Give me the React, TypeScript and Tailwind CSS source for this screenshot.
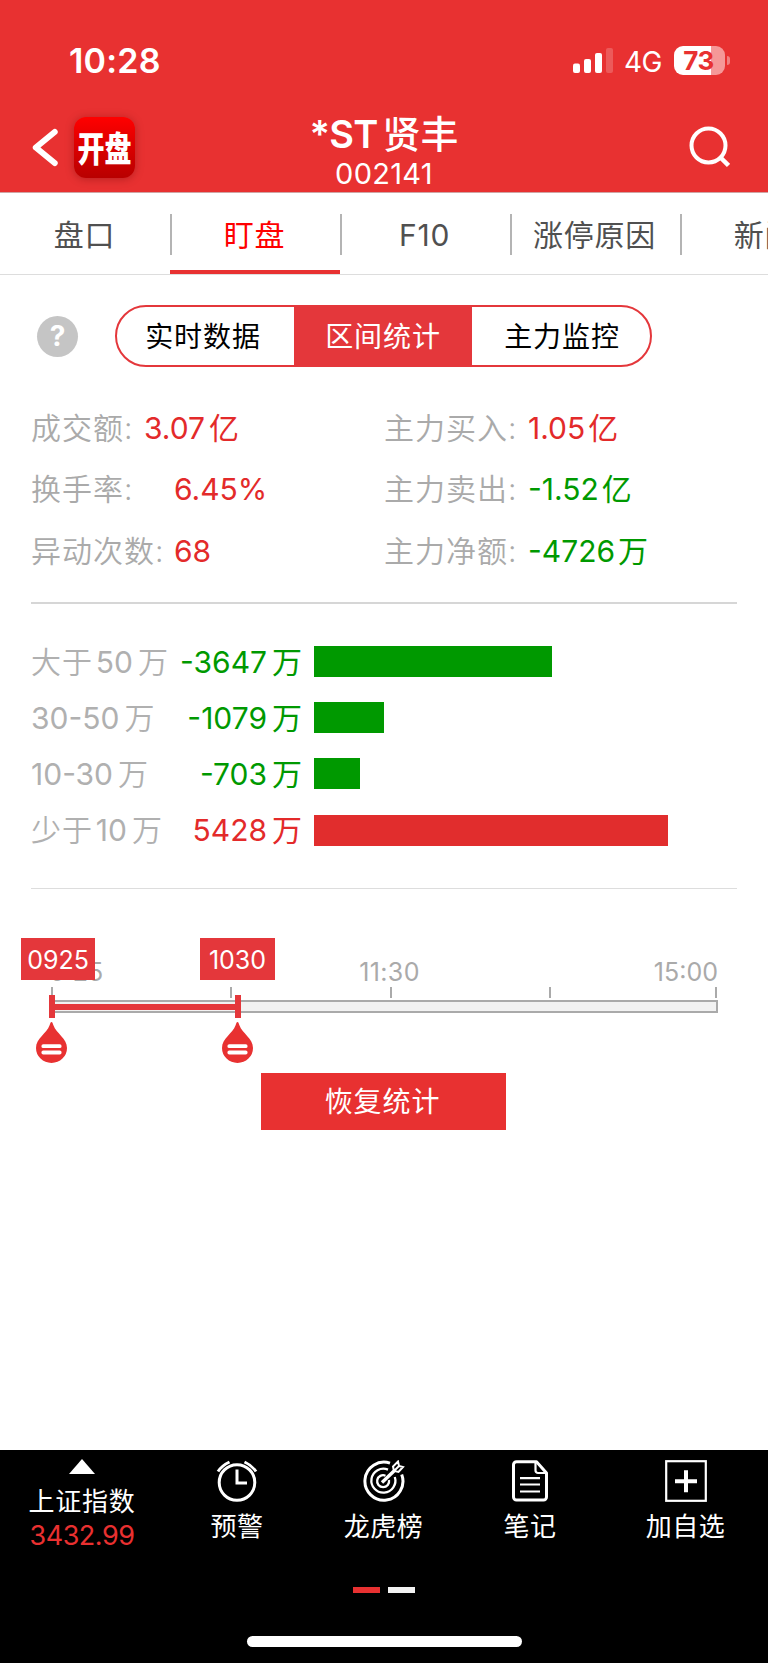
import React, { useState } from "react";

const tabs = ["盘口", "盯盘", "F10", "涨停原因", "新闻"];
const segments = [
  { name: "实时数据", size: "w-[177px] pr-[5px]" },
  { name: "区间统计", size: "w-[178px]" },
  { name: "主力监控", size: "w-[178px] pl-[2px]" },
];

const leftStats = [
  { label: "成交额:", value: "3.07", unit: "亿", gap: "w-[113px]" },
  { label: "换手率:", value: "6.45%", unit: "", gap: "w-[143px]" },
  { label: "异动次数:", value: "68", unit: "", gap: "w-[143px]" },
];

const rightStats = [
  { label: "主力买入:", value: "1.05", unit: "亿", color: "text-[#e32a2a]" },
  { label: "主力卖出:", value: "-1.52", unit: "亿", color: "text-[#009900]" },
  { label: "主力净额:", value: "-4726", unit: "万", color: "text-[#009900]" },
];

const flows = [
  { pre: "大于", range: "50", value: -3647, width: 237.5 },
  { pre: "", range: "30-50", value: -1079, width: 70.3 },
  { pre: "", range: "10-30", value: -703, width: 46 },
  { pre: "少于", range: "10", value: 5428, width: 353.5 },
];

const StatusBar = () => (
  <div className="flex h-[102px] items-start pt-[44px] pl-[69px]">
    <div className="w-[504px] text-[34px] leading-[34px] font-semibold tracking-[0.2px]">10:28</div>
    <svg className="mt-[4px] h-[25px] w-[40px]" viewBox="0 0 40 25" fill="#fff">
      <rect x="0" y="15.5" width="7" height="9.5" rx="2" />
      <rect x="11" y="11" width="7" height="14" rx="2" />
      <rect x="22" y="5" width="7" height="20" rx="2" />
      <rect x="33" y="0" width="7" height="25" rx="2" opacity="0.2" />
    </svg>
    <div className="ml-[11px] w-[50px] text-[28px] leading-[36px] tracking-[-0.5px]">4G</div>
    <div className="mt-[2px] flex items-center">
      <div className="flex h-[29px] w-[51px] items-center justify-center rounded-[9px] bg-linear-to-r from-white from-73% to-[#f59898] to-73% pr-[2px] text-[26px] leading-none font-bold tracking-[-0.5px] text-[#e83131]">
        73
      </div>
      <div className="ml-[2px] h-[9px] w-[3px] rounded-r-full bg-[#f08080]" />
    </div>
  </div>
);

const Header = () => (
  <div className="h-[193px] border-b border-[#cfa5a5] bg-[#e83131] text-white">
    <StatusBar />
    <div className="flex h-[90px] items-start justify-between pl-[32px]">
      <div className="flex w-[240px]">
        <svg className="mt-[26px] h-[39px] w-[27px]" viewBox="0 0 27 39" fill="none" stroke="#fff" strokeWidth="6" strokeLinecap="round" strokeLinejoin="round">
          <path d="M22.7 4 L3.8 19.5 L22.7 35" />
        </svg>
        <div className="mt-[15px] ml-[15px] flex h-[61px] w-[61px] items-center justify-center rounded-[12px] bg-linear-to-b from-[#ff0000] to-[#b80000] text-[27px] leading-none font-black whitespace-nowrap shadow-[0_1px_8px_rgba(90,0,0,0.35)]">
          <span className="inline-block translate-y-[2px] scale-y-[1.3]">开盘</span>
        </div>
      </div>
      <div className="flex flex-col items-center pt-[13px]">
        <div className="flex text-[38px] leading-[38px] font-medium">
          <span className="font-semibold tracking-[-0.8px]">*ST</span>
          <span className="ml-[5px]">贤丰</span>
        </div>
        <div className="mt-[5px] text-[29px] leading-[32px] tracking-[0.3px]">002141</div>
      </div>
      <svg className="mt-[24px] mr-[38px] ml-[193px] h-[42px] w-[41px]" viewBox="0 0 41 42" fill="none" stroke="#fff" strokeWidth="4">
        <circle cx="19.5" cy="19.5" r="17" />
        <path d="M31 31 L39.5 39.5" strokeWidth="4.5" />
      </svg>
    </div>
  </div>
);

const Tabs = () => {
  const [active, setActive] = useState(1);
  return (
    <div className="flex h-[82px] overflow-hidden border-b border-[#dddddd]">
      {tabs.map((tab, i) => (
        <button key={tab} className="flex w-[170px] shrink-0 flex-col" onClick={() => setActive(i)}>
          <div className="mt-[21px] flex h-[41px] items-center">
            <div className={`h-[41px] w-[2px] ${i > 0 ? "bg-[#b4b4b4]" : ""}`} />
            <div className={`w-[165px] pt-[2px] text-center text-[30px] leading-[41px] tracking-[0.8px] whitespace-nowrap ${i === active ? "text-[#ff0000]" : "text-[#505050]"}`}>
              {tab}
            </div>
          </div>
          <div className={`mt-[15px] h-[4px] w-full ${i === active ? "bg-[#e83131]" : ""}`} />
        </button>
      ))}
    </div>
  );
};

const SegmentBar = () => {
  const [active, setActive] = useState(1);
  return (
    <div className="flex items-center pt-[30px] pl-[37px]">
      <div className="flex h-[41px] w-[41px] items-center justify-center rounded-full bg-[#c5c5c5] text-[28px] leading-none font-bold text-white">?</div>
      <div className="ml-[37px] flex h-[62px] w-[537px] overflow-hidden rounded-full border-2 border-[#e4373b]">
        {segments.map((item, i) => (
          <button
            key={item.name}
            className={`${item.size} text-[28px] leading-[60px] tracking-[0.9px] ${i === active ? "bg-[#e4373b] text-white" : "text-black"}`}
            onClick={() => setActive(i)}
          >
            {item.name}
          </button>
        ))}
      </div>
    </div>
  );
};

const Stats = () => (
  <div className="mx-[31px] mt-[31px] flex h-[206px] border-b-2 border-[#d6d6d6] text-[30px] leading-[61.4px]">
    <div className="w-[353px]">
      {leftStats.map((s) => (
        <div key={s.label} className="flex">
          <div className={`${s.gap} font-[350] tracking-[1px] whitespace-nowrap text-[#aaaaaa]`}>{s.label}</div>
          <div className="text-[#e32a2a]">
            {s.value}
            <span className="ml-[4px]">{s.unit}</span>
          </div>
        </div>
      ))}
    </div>
    <div>
      {rightStats.map((s) => (
        <div key={s.label} className="flex">
          <div className="w-[144px] font-[350] tracking-[1px] whitespace-nowrap text-[#aaaaaa]">{s.label}</div>
          <div className={s.color}>
            {s.value}
            <span className="ml-[3px]">{s.unit}</span>
          </div>
        </div>
      ))}
    </div>
  </div>
);

const Flows = () => (
  <div className="mx-[31px] flex h-[285px] flex-col border-b border-[#dddddd] pt-[29px] text-[30px] leading-[56.3px]">
    {flows.map((f) => (
      <div key={f.value} className="flex h-[56.3px] items-center">
        <div className="w-[140px] pt-px whitespace-nowrap text-[#b0b0b0]">
          <span className="font-[350] tracking-[0.9px]">{f.pre}</span>
          <span className={f.pre ? "ml-[3px]" : ""}>{f.range}</span>
          <span className="ml-[5px] font-[350]">万</span>
        </div>
        <div className={`w-[131px] pt-px text-right whitespace-nowrap ${f.value < 0 ? "text-[#009900]" : "text-[#e32a2a]"}`}>
          {f.value}
          <span className="ml-[5px]">万</span>
        </div>
        <div className={`ml-[12px] h-[31px] ${f.value < 0 ? "bg-[#009900]" : "bg-[#e12d2d]"}`} style={{ width: f.width }} />
      </div>
    ))}
  </div>
);

const Thumb = () => (
  <div className="flex flex-col items-center gap-1">
    <div className="h-[23px] w-[6px] bg-[#e4373b]" />
    <svg className="h-[41px] w-[31px]" viewBox="0 0 31 41">
      <path d="M15.5 0 C16.5 0 16.8 1.5 17.3 3 C20.5 12 31 16 31 26 A15.5 15 0 0 1 0 26 C0 16 10.5 12 13.7 3 C14.2 1.5 14.5 0 15.5 0Z" fill="#e83131" />
      <path d="M7.3 24.2H23.7M7.3 30.5H23.7" stroke="#fff" strokeWidth="3.8" strokeLinecap="round" />
    </svg>
  </div>
);

//1 Time range slider, thumbs and their labels float over the track
const TimeRange = () => (
  <div className="relative ml-[50px] h-[184px] w-[668px] text-[25px] leading-none text-[#aaaaaa]">
    <div className="flex justify-between pt-[71px]">
      <span>9:25</span>
      <span className="ml-[22px] tracking-[0.4px]">11:30</span>
      <span>15:00</span>
    </div>
    <div className="mt-[2px] flex h-[11px] pl-px">
      <div className="w-[179px] border-l-2 border-[#aaaaaa]" />
      <div className="w-[160px] border-l-2 border-[#aaaaaa]" />
      <div className="w-[159px] border-l-2 border-[#aaaaaa]" />
      <div className="w-[168px] border-x-2 border-[#aaaaaa]" />
    </div>
    <div className="mt-[2px] h-[13px] border-2 border-[#aaaaaa] bg-[#f2f2f2]" />
    <div className="absolute top-[115px] left-0 h-[6px] w-[190px] bg-[#e4373b]" />
    <div className="absolute top-[49px] left-[-29px] h-[42px] w-[74px] bg-[#e4373b] text-center leading-[44px] text-white">0925</div>
    <div className="absolute top-[49px] left-[150px] h-[42px] w-[75px] bg-[#e4373b] text-center leading-[44px] text-white">1030</div>
    <div className="absolute top-[106px] left-[-14px]"><Thumb /></div>
    <div className="absolute top-[106px] left-[172px]"><Thumb /></div>
  </div>
);

const AlarmIcon = () => (
  <svg className="h-[42px] w-[42px]" viewBox="0 0 42 42" fill="none" stroke="#fff" strokeWidth="3">
    <circle cx="21" cy="22.5" r="17.8" />
    <path d="M21 9.5V23H31" />
    <path d="M2 11.5Q6 5.5 13.5 2M40 11.5Q36 5.5 28.5 2" />
  </svg>
);

const TargetIcon = () => (
  <svg className="h-[42px] w-[42px]" viewBox="0 0 42 42" fill="none" stroke="#fff">
    <path d="M27 3.2A19 19 0 1 0 38.7 14.5" strokeWidth="3" />
    <path d="M25 9.6A12 12 0 1 0 31.8 17" strokeWidth="2.3" />
    <path d="M22.5 15.7A6 6 0 1 0 26 20" strokeWidth="2.3" />
    <path d="M19 22.5L31 11" strokeWidth="3.4" />
    <path d="M31 11L30 6.5L35 1.5L36 6L40 7L35.5 12Z M31 11L36 6" strokeWidth="2" />
  </svg>
);

const NoteIcon = () => (
  <svg className="h-[42px] w-[36px]" viewBox="0 0 36 42" fill="none" stroke="#fff" strokeWidth="3" strokeLinejoin="round">
    <path d="M24.5 1.8H4.5A3 3 0 0 0 1.5 4.8V37A3 3 0 0 0 4.5 40H31.5A3 3 0 0 0 34.5 37V13Z" />
    <path d="M23.5 2V10.5A2.5 2.5 0 0 0 26 13H34" strokeWidth="2.2" />
    <path d="M8 18.2H28M8 24.5H28M8 31.5H28" strokeWidth="2.2" />
  </svg>
);

const AddIcon = () => (
  <svg className="h-[42px] w-[42px]" viewBox="0 0 42 42" fill="none" stroke="#fff">
    <rect x="1.2" y="1.2" width="39.6" height="39.6" strokeWidth="2.2" />
    <path d="M10 21.3H32M21 10.3V32.3" strokeWidth="4" />
  </svg>
);

const actions = [
  { name: "预警", icon: <AlarmIcon />, width: "w-[146px]" },
  { name: "龙虎榜", icon: <TargetIcon />, width: "w-[147px]" },
  { name: "笔记", icon: <NoteIcon />, width: "w-[146px]" },
  { name: "加自选", icon: <AddIcon />, width: "w-[165px]" },
];

const Footer = () => (
  <div className="flex h-[213px] flex-col items-center bg-black text-white">
    <div className="flex h-[137px] w-full text-[26px] leading-[30px]">
      <div className="flex w-[164px] shrink-0 flex-col items-center pt-[9px]">
        <svg className="h-[15px] w-[26px]" viewBox="0 0 26 15" fill="#fff">
          <path d="M13 0L26 15H0Z" />
        </svg>
        <div className="mt-[13px] tracking-[0.7px]">上证指数</div>
        <div className="mt-[4px] text-[27px] tracking-[-0.5px] text-[#e93030]">3432.99</div>
      </div>
      {actions.map((a) => (
        <div key={a.name} className={`flex shrink-0 flex-col items-center pt-[10px] ${a.width}`}>
          {a.icon}
          <div className="mt-[10px] tracking-[0.5px]">{a.name}</div>
        </div>
      ))}
    </div>
    <div className="flex gap-2">
      <div className="h-[6px] w-[27px] bg-[#e83131]" />
      <div className="h-[6px] w-[27px] bg-[#f2f2f2]" />
    </div>
    <div className="mt-[43px] h-[11px] w-[275px] rounded-full bg-white" />
  </div>
);

const App = () => {
  return (
    <div className="flex h-[1663px] w-[768px] flex-col overflow-hidden bg-white font-[Inter,'Noto_Sans_CJK_SC',sans-serif]">
      <Header />
      <Tabs />
      <SegmentBar />
      <Stats />
      <Flows />
      <TimeRange />
      <button className="ml-[261px] h-[57px] w-[245px] bg-[#e83131] pr-[2px] text-[28px] leading-[59px] tracking-[0.9px] text-white">恢复统计</button>
      <div className="flex-1" />
      <Footer />
    </div>
  );
};

export default App;
